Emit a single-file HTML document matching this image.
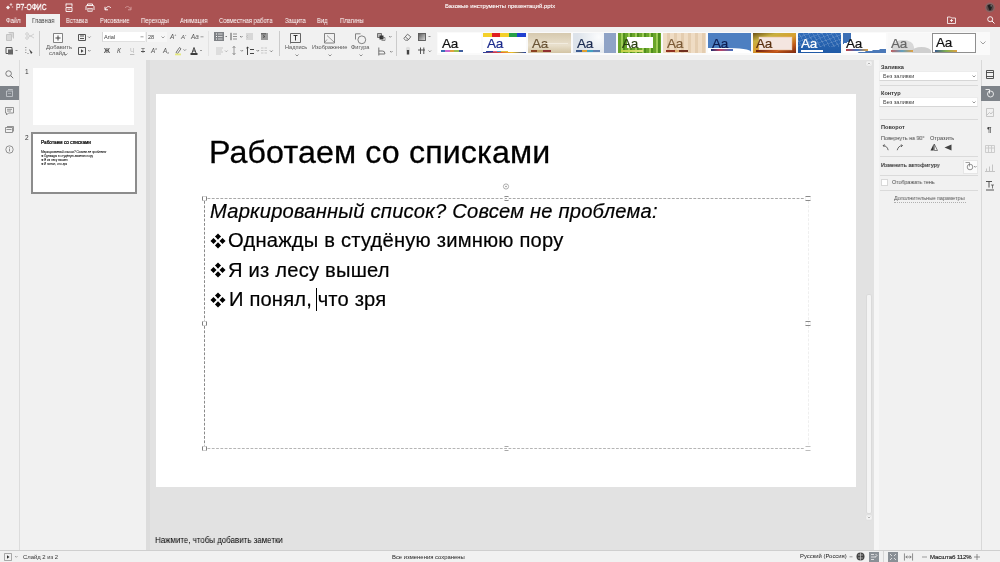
<!DOCTYPE html>
<html><head><meta charset="utf-8">
<style>
*{margin:0;padding:0;box-sizing:border-box}
html,body{width:1000px;height:562px;overflow:hidden;background:#f1f1f1;font-family:"Liberation Sans",sans-serif;position:relative}
.a{position:absolute}
.t{position:absolute;white-space:nowrap;line-height:1;will-change:transform}
svg{position:absolute;overflow:visible}
.hdr{left:0;top:0;width:1000px;height:27px;background:#aa5252}
.tab{color:#fff;font-size:6.8px;top:18px;transform-origin:0 0;transform:scaleX(.86)}
.tb{left:0;top:27px;width:1000px;height:33px;background:#f1f1f1}
.sep{position:absolute;width:1px;background:#cbcbcb}
.canvas{left:146px;top:60px;width:728px;height:490px;background:#e2e2e2;border-left:4px solid #dcdcdc}
.slide{left:156px;top:94px;width:700px;height:393px;background:#fff}
.status{left:0;top:550px;width:1000px;height:12px;background:#f1f1f1;border-top:1px solid #cfcfcf}
.lbar{left:0;top:60px;width:20px;height:490px;background:#f1f1f1;border-right:1px solid #dcdcdc}
.thumbs{left:20px;top:60px;width:126px;height:490px;background:#f1f1f1}
.rpanel{left:874px;top:60px;width:108px;height:490px;background:#f1f1f1}
.rbar{left:981px;top:60px;width:19px;height:490px;background:#f1f1f1;border-left:1px solid #d8d8d8}
.ico{stroke:#444;fill:none;stroke-width:1}
.tile{position:absolute;top:33px;width:43px;height:20px;overflow:hidden}
.tile .aa{will-change:transform;position:absolute;left:3.5px;top:3.5px;font-size:13.5px;line-height:1;letter-spacing:-0.2px;-webkit-text-stroke:.2px currentColor}
.bars{position:absolute;left:3px;top:17px;height:1.5px;width:26px}
.rl{font-size:5.6px;color:#333;font-weight:bold}
.rt{font-size:5.6px;color:#444}
.combo{position:absolute;background:#fff;border:1px solid #ececec;border-bottom-color:#d6d6d6;height:10px}
.hl{position:absolute;height:1px;background:#dadada}
</style></head><body>
<!-- header -->
<div class="a hdr"></div>
<div class="a tb"></div>
<div class="a canvas"></div>
<div class="a slide"></div>
<div class="a lbar"></div>
<div class="a thumbs"></div>
<div class="a rpanel"></div>
<div class="a rbar"></div>
<div class="a status"></div>




<!-- SLIDE CONTENT -->
<div class="t" style="left:209px;top:135.5px;font-size:32.2px;color:#000;letter-spacing:.12px;-webkit-text-stroke:.3px #000">Работаем со списками</div>
<svg style="left:0;top:0" width="1000" height="562" viewBox="0 0 1000 562">
<g stroke-width="1" fill="none">
<path d="M207.5 198.5H805" stroke="#a8a8a8" stroke-dasharray="2.8 1.5"/>
<path d="M204.5 201V320.5 M204.5 326V445.5" stroke="#8a8a8a" stroke-dasharray="2.8 1.6"/>
<path d="M207.5 448.5H805" stroke="#b5b5b5" stroke-dasharray="2.8 1.5"/>
<path d="M808.5 201V446" stroke="#efefef" stroke-dasharray="2.8 1.5"/>
<g stroke="#d0d0d0"><path d="M202.5 196.5h4 M202.5 200.5h4 M202.5 321.5h4 M202.5 325.5h4 M202.5 446.5h4 M202.5 450.5h4"/></g>
<g stroke="#808080"><path d="M202.5 196.5v4 M206.5 196.5v4 M202.5 321.5v4 M206.5 321.5v4 M202.5 446.5v4 M206.5 446.5v4"/></g>
<g stroke="#f2f2f2"><path d="M504.5 196.5v4 M508.5 196.5v4 M805.5 196.5v4 M810.5 196.5v4 M805.5 321.5v4 M810.5 321.5v4"/></g>
<g stroke="#8a8a8a"><path d="M504.5 196.5h4 M504.5 200.5h4 M805.5 196.5h5 M805.5 200.5h5 M805.5 321.5h5 M805.5 325.5h5"/></g>
<path d="M504.5 446.5h4 M504.5 450.5h4" stroke="#a8a8a8"/>
<path d="M805.5 446.5h5 M805.5 450.5h5" stroke="#bdbdbd"/>
<circle cx="506" cy="186.5" r="2.6" stroke="#999" stroke-width=".8"/>
<circle cx="506" cy="186.5" r=".7" fill="#777" stroke="none"/>
</g></svg>
<div class="t" style="left:209.5px;top:201.6px;font-size:19.3px;color:#000;font-style:italic;letter-spacing:.2px;-webkit-text-stroke:.2px #000;transform-origin:0 0;transform:scaleX(1.045)">Маркированный список? Совсем не проблема:</div>
<svg style="left:210px;top:232.5px" width="16" height="16" viewBox="0 0 16 16"><path d="M8 0.5500000000000003Q9.42 2.18 11.05 3.6Q9.42 5.02 8 6.65Q6.58 5.02 4.95 3.6Q6.58 2.18 8 0.5500000000000003Z M3.5 4.95Q4.92 6.58 6.55 8Q4.92 9.42 3.5 11.05Q2.08 9.42 0.4500000000000002 8Q2.08 6.58 3.5 4.95Z M12.5 4.95Q13.92 6.58 15.55 8Q13.92 9.42 12.5 11.05Q11.08 9.42 9.45 8Q11.08 6.58 12.5 4.95Z M8 9.350000000000001Q9.42 10.98 11.05 12.4Q9.42 13.82 8 15.45Q6.58 13.82 4.95 12.4Q6.58 10.98 8 9.350000000000001Z" fill="#000"/></svg>
<div class="t" style="left:228px;top:231.1px;font-size:19.3px;color:#000;letter-spacing:.2px;-webkit-text-stroke:.2px #000;transform-origin:0 0;transform:scaleX(1.045)">Однажды в студёную зимнюю пору</div>
<svg style="left:210px;top:262px" width="16" height="16" viewBox="0 0 16 16"><path d="M8 0.5500000000000003Q9.42 2.18 11.05 3.6Q9.42 5.02 8 6.65Q6.58 5.02 4.95 3.6Q6.58 2.18 8 0.5500000000000003Z M3.5 4.95Q4.92 6.58 6.55 8Q4.92 9.42 3.5 11.05Q2.08 9.42 0.4500000000000002 8Q2.08 6.58 3.5 4.95Z M12.5 4.95Q13.92 6.58 15.55 8Q13.92 9.42 12.5 11.05Q11.08 9.42 9.45 8Q11.08 6.58 12.5 4.95Z M8 9.350000000000001Q9.42 10.98 11.05 12.4Q9.42 13.82 8 15.45Q6.58 13.82 4.95 12.4Q6.58 10.98 8 9.350000000000001Z" fill="#000"/></svg>
<div class="t" style="left:228px;top:260.6px;font-size:19.3px;color:#000;letter-spacing:.2px;-webkit-text-stroke:.2px #000;transform-origin:0 0;transform:scaleX(1.045)">Я из лесу вышел</div>
<svg style="left:210px;top:291.5px" width="16" height="16" viewBox="0 0 16 16"><path d="M8 0.5500000000000003Q9.42 2.18 11.05 3.6Q9.42 5.02 8 6.65Q6.58 5.02 4.95 3.6Q6.58 2.18 8 0.5500000000000003Z M3.5 4.95Q4.92 6.58 6.55 8Q4.92 9.42 3.5 11.05Q2.08 9.42 0.4500000000000002 8Q2.08 6.58 3.5 4.95Z M12.5 4.95Q13.92 6.58 15.55 8Q13.92 9.42 12.5 11.05Q11.08 9.42 9.45 8Q11.08 6.58 12.5 4.95Z M8 9.350000000000001Q9.42 10.98 11.05 12.4Q9.42 13.82 8 15.45Q6.58 13.82 4.95 12.4Q6.58 10.98 8 9.350000000000001Z" fill="#000"/></svg>
<div class="t" style="left:228.5px;top:290.4px;font-size:19.3px;color:#000;letter-spacing:.16px;-webkit-text-stroke:.2px #000;transform-origin:0 0;transform:scaleX(1.045)">И понял, что зря</div>
<div class="a" style="left:316px;top:287.5px;width:1px;height:23px;background:#000"></div>

<!-- LEFT BAR -->
<svg style="left:5px;top:70px" width="9" height="9" viewBox="0 0 9 9"><circle cx="3.6" cy="3.6" r="2.8" stroke="#707070" fill="none" stroke-width=".9"/><path d="M5.6 5.6l2.6 2.6" stroke="#707070" stroke-width="1"/></svg>
<div class="a" style="left:0;top:86px;width:19px;height:14px;background:#7e8389"></div>
<svg style="left:5px;top:88px" width="9" height="10" viewBox="0 0 9 10"><path d="M1.5 3h6v5.5h-6z M3 1.5h4.5v1" stroke="#c9cdd2" fill="none" stroke-width=".8"/><path d="M3 5.5h3" stroke="#b8bcc0" stroke-width=".7"/></svg>
<svg style="left:5px;top:107px" width="9" height="9" viewBox="0 0 9 9"><path d="M.5 .5h8v5.5h-5l-2 2v-2h-1z M2 2.3h5 M2 4h4" stroke="#7a7a7a" fill="none" stroke-width=".8"/></svg>
<svg style="left:5px;top:126px" width="9" height="9" viewBox="0 0 9 9"><path d="M.5 1.5h7v5h-7z M2 .5h6.5v5 M1.5 3.5h5" stroke="#7a7a7a" fill="none" stroke-width=".8"/></svg>
<svg style="left:5px;top:145px" width="9" height="9" viewBox="0 0 9 9"><circle cx="4.5" cy="4.5" r="3.7" stroke="#7a7a7a" fill="none" stroke-width=".8"/><path d="M4.5 3.5v3 M4.5 2v.7" stroke="#7a7a7a" stroke-width=".8"/></svg>
<!-- THUMBS -->
<div class="t" style="left:25px;top:68.5px;font-size:6.5px;color:#333">1</div>
<div class="a" style="left:33px;top:68px;width:101px;height:57px;background:#fff"></div>
<div class="t" style="left:25px;top:135px;font-size:6.5px;color:#333">2</div>
<div class="a" style="left:31px;top:132px;width:106px;height:62px;background:#fff;border:2px solid #8c8c8c"></div>
<div class="t" style="left:40.5px;top:140.7px;font-size:4.75px;color:#000;-webkit-text-stroke:.2px #000">Работаем со списками</div>
<div class="t" style="left:40.5px;top:150.5px;font-size:3px;color:#111;-webkit-text-stroke:.06px #000;font-style:italic">Маркированный список? Совсем не проблема:</div>
<div class="t" style="left:40.5px;top:154.5px;font-size:3px;color:#111;-webkit-text-stroke:.06px #000">❖Однажды в студёную зимнюю пору</div>
<div class="t" style="left:40.5px;top:158.7px;font-size:3px;color:#111;-webkit-text-stroke:.06px #000">❖Я из лесу вышел</div>
<div class="t" style="left:40.5px;top:162.8px;font-size:3px;color:#111;-webkit-text-stroke:.06px #000">❖И понял, что зря</div>
<!-- notes -->
<div class="t" style="left:155px;top:536.3px;font-size:8.9px;color:#000;transform-origin:0 0;transform:scaleX(.893)">Нажмите, чтобы добавить заметки</div>
<!-- scrollbar -->
<svg style="left:865px;top:60px" width="8" height="7" viewBox="0 0 8 7"><rect x="1" y="1" width="6" height="5" rx="1" fill="#f3f3f3" stroke="#d8d8d8" stroke-width=".5"/><path d="M2.8 4.2l1.2-1.2l1.2 1.2" stroke="#888" fill="none" stroke-width=".6"/></svg>
<div class="a" style="left:865.5px;top:294px;width:6px;height:220px;background:#f4f4f4;border:1px solid #dadada;border-radius:2px"></div>
<svg style="left:865px;top:514px" width="8" height="7" viewBox="0 0 8 7"><rect x="1" y="1" width="6" height="5" rx="1" fill="#f3f3f3" stroke="#d8d8d8" stroke-width=".5"/><path d="M2.8 2.8l1.2 1.2l1.2-1.2" stroke="#888" fill="none" stroke-width=".6"/></svg>
<div class="a" style="left:874px;top:60px;width:5px;height:490px;background:#f6f6f6"></div>
<!-- RIGHT PANEL -->
<div class="t rl" style="left:880.5px;top:64.8px">Заливка</div>
<div class="combo" style="left:879px;top:70.5px;width:99px"></div>
<div class="t rt" style="left:882.8px;top:73.6px">Без заливки</div>
<svg style="left:972px;top:75px" width="4" height="3" viewBox="0 0 4 3"><path d="M.5 .5l1.5 1.5l1.5-1.5" stroke="#555" fill="none" stroke-width=".6"/></svg>
<div class="hl" style="left:880px;top:85px;width:98px"></div>
<div class="t rl" style="left:880.5px;top:90.5px">Контур</div>
<div class="combo" style="left:879px;top:97px;width:99px"></div>
<div class="t rt" style="left:882.8px;top:100px">Без заливки</div>
<svg style="left:972px;top:101px" width="4" height="3" viewBox="0 0 4 3"><path d="M.5 .5l1.5 1.5l1.5-1.5" stroke="#555" fill="none" stroke-width=".6"/></svg>
<div class="hl" style="left:880px;top:119px;width:98px"></div>
<div class="t rl" style="left:880.5px;top:124.5px">Поворот</div>
<div class="t rt" style="left:880.5px;top:135.5px;transform-origin:0 0;transform:scaleX(.96)">Повернуть на 90°</div>
<div class="t rt" style="left:930px;top:135.5px">Отразить</div>
<svg style="left:882px;top:144px" width="8" height="8" viewBox="0 0 8 8"><path d="M1.2 1.6Q5 1.6 6.2 6.2" stroke="#444" fill="none" stroke-width=".8"/><path d="M2.6 .4L1.2 1.6L2.4 3" stroke="#444" fill="none" stroke-width=".8"/></svg>
<svg style="left:895.5px;top:144px" width="8" height="8" viewBox="0 0 8 8"><path d="M1.2 6.2Q2.4 1.6 6.4 1.6" stroke="#444" fill="none" stroke-width=".8"/><path d="M5.2 .4L6.4 1.6L5 3" stroke="#444" fill="none" stroke-width=".8"/></svg>
<svg style="left:930px;top:144px" width="8" height="7" viewBox="0 0 8 7"><path d="M3.7 0 L3.7 6.5 L.5 6.5z" fill="#333"/><path d="M4.3 0 L4.3 6.5 L7.5 6.5z" fill="none" stroke="#333" stroke-width=".6"/></svg>
<svg style="left:944px;top:144px" width="8" height="7" viewBox="0 0 8 7"><path d="M7.5 .5 L7.5 6.5 L.5 3.5z" fill="#444"/></svg>
<div class="hl" style="left:880px;top:156px;width:98px"></div>
<div class="t rl" style="left:880.5px;top:162.8px;transform-origin:0 0;transform:scaleX(.96)">Изменить автофигуру</div>
<div class="a" style="left:962.5px;top:159.5px;width:15px;height:14px;background:#fbfbfb;border:1px solid #e6e6e6"></div>
<svg style="left:964.5px;top:161.5px" width="12" height="9" viewBox="0 0 12 9"><path d="M.5 .5h4v4" stroke="#666" fill="none" stroke-width=".6"/><circle cx="5" cy="5" r="2.8" stroke="#666" fill="none" stroke-width=".7"/><path d="M9 4l1.3 1.3l1.3-1.3" stroke="#555" fill="none" stroke-width=".6"/></svg>
<div class="hl" style="left:880px;top:175px;width:98px"></div>
<div class="a" style="left:880.5px;top:179px;width:7px;height:7px;background:#fff;border:1px solid #d8d8d8"></div>
<div class="t rt" style="left:892px;top:180px;transform-origin:0 0;transform:scaleX(.95)">Отображать тень</div>
<div class="hl" style="left:880px;top:190px;width:98px"></div>
<div class="t rt" style="left:893.7px;top:196.2px;color:#555;transform-origin:0 0;transform:scaleX(.94)">Дополнительные параметры</div>
<div class="a" style="left:894px;top:201.5px;width:72px;height:0;border-top:1px dotted #b0b0b0"></div>
<!-- RIGHT BAR -->
<svg style="left:986px;top:70px" width="8" height="9" viewBox="0 0 8 9"><path d="M.5 .5h7v8h-7z M.5 2.5h7 M.5 6.5h7" stroke="#444" fill="none" stroke-width=".9"/></svg>
<div class="a" style="left:981px;top:86px;width:19px;height:15px;background:#7e8389"></div>
<svg style="left:985px;top:89px" width="10" height="9" viewBox="0 0 10 9"><path d="M.5 .5h4v4" stroke="#fff" fill="none" stroke-width=".8"/><circle cx="5.5" cy="5" r="3" stroke="#fff" fill="none" stroke-width=".8"/></svg>
<svg style="left:986px;top:108px" width="8" height="9" viewBox="0 0 8 9"><path d="M.5 .5h7v8h-7z M1 7 L3.5 4.5 L5 6 L7 3.5" stroke="#bbb" fill="none" stroke-width=".8"/></svg>
<div class="t" style="left:987px;top:126px;font-size:8px;font-weight:bold;color:#444">¶</div>
<svg style="left:985px;top:145px" width="10" height="8" viewBox="0 0 10 8"><path d="M.5 .5h9v7h-9z M.5 3h9 M3.5 .5v7 M6.5 .5v7" stroke="#c4c4c4" fill="none" stroke-width=".8"/></svg>
<svg style="left:985px;top:163px" width="10" height="9" viewBox="0 0 10 9"><path d="M1.5 8.5v-3 M4.5 8.5v-5 M7.5 8.5v-7 M0 8.5h10" stroke="#c4c4c4" fill="none" stroke-width="1"/></svg>
<svg style="left:985px;top:181px" width="10" height="10" viewBox="0 0 10 10"><path d="M1 .5h6 M4 .5v6 M1 9h8" stroke="#444" fill="none" stroke-width=".9"/><path d="M6 4h3 M7.5 4v3.5" stroke="#444" fill="none" stroke-width=".7"/></svg>
<!-- STATUS -->
<svg style="left:4px;top:553px" width="16" height="8" viewBox="0 0 16 8"><path d="M.5 .5h7v7h-7z" stroke="#888" fill="none" stroke-width=".7"/><path d="M3 2.3v3.4l2.5-1.7z" fill="#333"/><path d="M11 3l1.3 1.3l1.3-1.3" stroke="#777" fill="none" stroke-width=".6"/></svg>
<div class="t" style="left:23px;top:554.7px;font-size:5.9px;color:#333">Слайд 2 из 2</div>
<div class="t" style="left:392px;top:554.5px;font-size:5.9px;color:#222">Все изменения сохранены</div>
<div class="t" style="left:800px;top:553.8px;font-size:5.9px;color:#222">Русский (Россия)</div>
<svg style="left:849px;top:555.5px" width="4" height="3" viewBox="0 0 4 3"><path d="M.5 .8h3" stroke="#777" stroke-width=".7"/></svg>
<svg style="left:855.5px;top:552px" width="9" height="9" viewBox="0 0 9 9"><circle cx="4.5" cy="4.5" r="4" fill="#444"/><path d="M2 3h5 M2 6h5 M4.5 .5v8" stroke="#ddd" stroke-width=".6"/></svg>
<div class="a" style="left:869px;top:552px;width:10px;height:10px;background:#8a9096"></div><div class="a" style="left:883px;top:551px;width:1px;height:11px;background:#d6d6d6"></div>
<svg style="left:870px;top:553px" width="8" height="8" viewBox="0 0 8 8"><path d="M1 1.5h3 M1 4h5 M1 6.5h3 M5.5 1l1.5 1.5l-1.5 1.5" stroke="#fff" fill="none" stroke-width=".7"/></svg>
<div class="a" style="left:888px;top:552px;width:10px;height:10px;background:#8a9096"></div>
<svg style="left:889px;top:553px" width="8" height="8" viewBox="0 0 8 8"><path d="M1 1l2 2 M7 1l-2 2 M1 7l2-2 M7 7l-2-2" stroke="#fff" fill="none" stroke-width=".7"/></svg>
<svg style="left:903.5px;top:553px" width="9" height="8" viewBox="0 0 10 8"><path d="M.5 0v8 M9.5 0v8 M2 4h6 M3.5 2.5l-1.5 1.5l1.5 1.5 M6.5 2.5l1.5 1.5l-1.5 1.5" stroke="#555" fill="none" stroke-width=".7"/></svg>
<svg style="left:922px;top:556px" width="5" height="2" viewBox="0 0 5 2"><path d="M0 1h5" stroke="#777" stroke-width=".7"/></svg>
<div class="t" style="left:929.5px;top:553.8px;font-size:6px;color:#222;-webkit-text-stroke:.15px #222;letter-spacing:-.05px">Масштаб 112%</div>
<svg style="left:973.5px;top:554px" width="6" height="6" viewBox="0 0 6 6"><path d="M0 3h6 M3 0v6" stroke="#666" stroke-width=".7"/></svg>

<!-- TOOLBAR -->
<!-- clipboard -->
<svg style="left:5px;top:32px" width="10" height="9" viewBox="0 0 10 9"><path d="M1.5 2.5h5v6h-5z M3.5 .5h5v6" stroke="#c4c4c4" fill="#d8d8d8" stroke-width="1"/></svg>
<svg style="left:25px;top:32px" width="10" height="8" viewBox="0 0 10 8"><circle cx="2" cy="2" r="1.3" stroke="#c8c8c8" fill="none" stroke-width=".8"/><circle cx="2" cy="6" r="1.3" stroke="#c8c8c8" fill="none" stroke-width=".8"/><path d="M3 2.6L9 6 M3 5.4L9 2" stroke="#c8c8c8" stroke-width=".8"/></svg>
<svg style="left:5px;top:46px" width="14" height="9" viewBox="0 0 14 9"><path d="M1 1.5h6v6h-6z" stroke="#555" fill="none" stroke-width="1"/><rect x="3" y="3.5" width="5" height="5" fill="#666"/><path d="M10.5 4.5h2" stroke="#777" stroke-width=".8"/></svg>
<svg style="left:25px;top:47px" width="9" height="8" viewBox="0 0 9 8"><path d="M.8 0v1 M.8 2.5v1 M.8 5v1 M2.5 6.5h1" stroke="#666" stroke-width=".8"/><path d="M4 2 L7.5 5.5 L6 7 Z" fill="#444"/></svg>
<div class="sep" style="left:39px;top:31px;height:25px"></div>
<!-- slides -->
<svg style="left:53px;top:33px" width="10" height="10" viewBox="0 0 10 10"><path d="M.5 .5h9v9h-9z" stroke="#666" fill="#fafafa" stroke-width=".8"/><path d="M5 2.5v5 M2.5 5h5" stroke="#333" stroke-width=".9"/></svg>
<div class="t" style="left:45.5px;top:44.8px;font-size:5.9px;color:#555">Добавить</div>
<div class="t" style="left:48.5px;top:50.8px;font-size:5.9px;color:#555">слайд</div>
<svg style="left:64px;top:53px" width="4" height="3" viewBox="0 0 4 3"><path d="M.5 .5l1.5 1.5l1.5-1.5" stroke="#666" fill="none" stroke-width=".7"/></svg>
<svg style="left:78px;top:34px" width="14" height="7" viewBox="0 0 14 7"><path d="M.5 .5h7v6h-7z M2 2h4 M2 4.5h4" stroke="#555" fill="none" stroke-width="1"/><path d="M10 2.5l1.3 1.3l1.3-1.3" stroke="#666" fill="none" stroke-width=".7"/></svg>
<svg style="left:78px;top:47px" width="14" height="8" viewBox="0 0 14 8"><path d="M.5 .5h7v7h-7z" stroke="#555" fill="none" stroke-width="1"/><path d="M3 2.3v3.4l2.6-1.7z" fill="#444"/><path d="M10 3l1.3 1.3l1.3-1.3" stroke="#666" fill="none" stroke-width=".7"/></svg>
<!-- font -->
<div class="a" style="left:102px;top:32px;width:43px;height:10px;background:#fff;border-left:1px solid #d5d5d5;border-bottom:1px solid #e0e0e0"></div>
<div class="t" style="left:104px;top:35px;font-size:5.6px;color:#444">Arial</div>
<svg style="left:140px;top:36px" width="4" height="3" viewBox="0 0 4 3"><path d="M.5 .8h3" stroke="#777" stroke-width=".7"/></svg>
<div class="a" style="left:146px;top:32px;width:21px;height:10px;background:#f6f6f6;border-left:1px solid #dcdcdc"></div>
<div class="t" style="left:148px;top:35px;font-size:5.6px;color:#444">28</div>
<svg style="left:161px;top:36px" width="4" height="3" viewBox="0 0 4 3"><path d="M.5 .5l1.5 1.5l1.5-1.5" stroke="#777" fill="none" stroke-width=".7"/></svg>
<div class="t" style="left:169.5px;top:33.8px;font-size:6.5px;color:#555;font-style:italic">A<sup style="font-size:3.5px;vertical-align:3px">+</sup></div>
<div class="t" style="left:181px;top:34.3px;font-size:6px;color:#555;font-style:italic">A<sup style="font-size:3.5px;vertical-align:3px">-</sup></div>
<div class="t" style="left:191px;top:34px;font-size:6.3px;color:#555;font-style:italic">Aa</div>
<svg style="left:200px;top:36px" width="4" height="3" viewBox="0 0 4 3"><path d="M.5 .8h3" stroke="#777" stroke-width=".7"/></svg>
<div class="t" style="left:104px;top:48px;font-size:6.5px;color:#444;font-weight:bold">Ж</div>
<div class="t" style="left:117px;top:48px;font-size:6.5px;color:#555;font-style:italic">К</div>
<div class="t" style="left:129.5px;top:47.5px;font-size:6.5px;color:#bbb;text-decoration:underline">Ч</div>
<div class="t" style="left:140.5px;top:47.8px;font-size:6.5px;color:#555;text-decoration:line-through">Т</div>
<div class="t" style="left:151px;top:48px;font-size:6.3px;color:#555;font-style:italic">A<sup style="font-size:3.5px;vertical-align:3px">x</sup></div>
<div class="t" style="left:162.5px;top:48px;font-size:6.3px;color:#555;font-style:italic">A<sub style="font-size:3.5px;vertical-align:-1px">x</sub></div>
<svg style="left:174px;top:46px" width="14" height="10" viewBox="0 0 14 10"><path d="M2 6.5 L5.5 1.5 L7 2.8 L3.5 7.5z" stroke="#555" fill="none" stroke-width=".8"/><rect x="1" y="7.5" width="6" height="1.8" fill="#e6ea80"/><path d="M9.5 3.3l1.3 1.3l1.3-1.3" stroke="#666" fill="none" stroke-width=".7"/></svg>
<svg style="left:190px;top:46px" width="14" height="10" viewBox="0 0 14 10"><path d="M2 7 L4 1.5 L6 7 M2.8 5h2.4" stroke="#333" fill="none" stroke-width=".9"/><rect x="0.5" y="7.2" width="7" height="1.6" fill="#111"/><path d="M10 4.5h2" stroke="#777" stroke-width=".7"/></svg>
<div class="sep" style="left:208px;top:31px;height:25px;background:#e2e2e2"></div>
<!-- paragraph -->
<div class="a" style="left:214px;top:32px;width:10px;height:9px;background:#7f8286"></div>
<svg style="left:214px;top:32px" width="16" height="9" viewBox="0 0 16 9"><path d="M2 2h1 M2 4.5h1 M2 7h1" stroke="#fff" stroke-width="1"/><path d="M4 2h4.5 M4 4.5h4.5 M4 7h4.5" stroke="#e6e6e6" stroke-width=".8"/><path d="M11.5 4.5h1.5" stroke="#555" stroke-width=".8"/></svg>
<svg style="left:230px;top:32px" width="14" height="9" viewBox="0 0 14 9"><path d="M1 .8v7.4" stroke="#555" stroke-width="1"/><path d="M3 2h4 M3 4.5h4 M3 7h4" stroke="#777" stroke-width=".8"/><path d="M10 4l1.3 1.3l1.3-1.3" stroke="#555" fill="none" stroke-width=".7"/></svg>
<svg style="left:246px;top:33px" width="7" height="7" viewBox="0 0 7 7"><rect x="0" y="0" width="7" height="7" fill="#d7d7d7"/><path d="M2 2 L.5 3.5 L2 5" stroke="#bbb" fill="none" stroke-width=".7"/></svg>
<svg style="left:261px;top:33px" width="7" height="7" viewBox="0 0 7 7"><rect x="0" y="0" width="7" height="7" fill="#9a9a9a"/><path d="M0 .8h5 M2 2.5 L4 3.5 L2 4.5" stroke="#444" fill="none" stroke-width=".8"/></svg>
<svg style="left:216px;top:47px" width="14" height="8" viewBox="0 0 14 8"><path d="M0 1h7 M0 3h6 M0 5h7 M0 7h5" stroke="#c9c9c9" stroke-width="1"/><path d="M9 3.5l1.3 1.3l1.3-1.3" stroke="#999" fill="none" stroke-width=".7"/></svg>
<svg style="left:231px;top:46px" width="14" height="10" viewBox="0 0 14 10"><path d="M3 0v9 M1.5 2l1.5-1.5l1.5 1.5 M1.5 7l1.5 1.5l1.5-1.5" stroke="#777" fill="none" stroke-width=".7"/><path d="M9.5 4l1.3 1.3l1.3-1.3" stroke="#666" fill="none" stroke-width=".7"/></svg>
<svg style="left:246px;top:46px" width="14" height="10" viewBox="0 0 14 10"><path d="M1.5 1v8 M.3 2.2l1.2-1.2l1.2 1.2" stroke="#333" fill="none" stroke-width=".9"/><path d="M4 3.5h4 M4 7.5h4" stroke="#444" stroke-width="1"/><path d="M10.5 4l1.3 1.3l1.3-1.3" stroke="#555" fill="none" stroke-width=".7"/></svg>
<svg style="left:261px;top:47px" width="14" height="8" viewBox="0 0 14 8"><path d="M0 1h2.5 M0 3.5h2.5 M0 6h2.5 M3.5 1h2.5 M3.5 3.5h2.5 M3.5 6h2.5" stroke="#c9c9c9" stroke-width="1.2"/><path d="M9 3.5l1.3 1.3l1.3-1.3" stroke="#555" fill="none" stroke-width=".7"/></svg>
<div class="sep" style="left:279px;top:31px;height:25px"></div>
<!-- insert -->
<svg style="left:290px;top:33px" width="12" height="11" viewBox="0 0 12 11"><path d="M.5 .5h10v9h-10z" stroke="#555" fill="none" stroke-width=".9"/><path d="M3.5 2.5h4 M5.5 2.5v5" stroke="#333" stroke-width="1"/><path d="M.5 9.5v1" stroke="#555" stroke-width=".9"/></svg>
<div class="t" style="left:285px;top:44.8px;font-size:5.6px;color:#555">Надпись</div>
<svg style="left:295px;top:54px" width="4" height="3" viewBox="0 0 4 3"><path d="M.5 .5l1.5 1.5l1.5-1.5" stroke="#666" fill="none" stroke-width=".7"/></svg>
<svg style="left:323.5px;top:33px" width="12" height="11" viewBox="0 0 12 11"><path d="M.5 .5h10v9.5h-10z" stroke="#666" fill="none" stroke-width=".8"/><path d="M1 9 L3 6.5 M3 2.5 L10 9" stroke="#777" fill="none" stroke-width=".7"/></svg>
<div class="t" style="left:312px;top:44.8px;font-size:5.6px;color:#555">Изображение</div>
<svg style="left:328px;top:54px" width="4" height="3" viewBox="0 0 4 3"><path d="M.5 .5l1.5 1.5l1.5-1.5" stroke="#666" fill="none" stroke-width=".7"/></svg>
<svg style="left:354.5px;top:32.5px" width="12" height="12" viewBox="0 0 12 12"><path d="M.5 6.5V.8H5.5" stroke="#666" fill="none" stroke-width=".8"/><circle cx="6.8" cy="6.8" r="3.9" stroke="#666" fill="none" stroke-width=".8"/></svg>
<div class="t" style="left:351px;top:44.8px;font-size:5.6px;color:#555">Фигура</div>
<svg style="left:359px;top:54px" width="4" height="3" viewBox="0 0 4 3"><path d="M.5 .5l1.5 1.5l1.5-1.5" stroke="#666" fill="none" stroke-width=".7"/></svg>
<svg style="left:377px;top:33px" width="16" height="8" viewBox="0 0 16 8"><path d="M.5 .5h4v4h-4z" stroke="#555" fill="#bbb" stroke-width=".8"/><rect x="2.5" y="2.5" width="4" height="4" fill="#333"/><path d="M4.5 4.5h3.5v3h-3.5" stroke="#555" fill="none" stroke-width=".6"/><path d="M12 3l1.3 1.3l1.3-1.3" stroke="#666" fill="none" stroke-width=".7"/></svg>
<svg style="left:377.5px;top:46.5px" width="16" height="9" viewBox="0 0 16 9"><path d="M.8 .5v8 M.8 4h3.5q2.5 0 2.5 2.2v.8h-6" stroke="#555" fill="none" stroke-width=".8"/><path d="M12 4l1.3 1.3l1.3-1.3" stroke="#666" fill="none" stroke-width=".7"/></svg>
<div class="sep" style="left:396px;top:31px;height:25px"></div>
<!-- misc -->
<svg style="left:403px;top:33px" width="9" height="8" viewBox="0 0 9 8"><path d="M.8 5.5 L4.5 1.2 L7.8 3.8 L5 7.2 L2.5 7.2z M2.5 4l3 2.5" stroke="#555" fill="none" stroke-width=".8"/></svg>
<svg style="left:418px;top:33px" width="14" height="8" viewBox="0 0 14 8"><defs><linearGradient id="gsz" x1="0" y1="0" x2="1" y2="1"><stop offset="0" stop-color="#555"/><stop offset="1" stop-color="#ddd"/></linearGradient></defs><rect x=".5" y=".5" width="7" height="7" fill="url(#gsz)" stroke="#555" stroke-width=".9"/><path d="M10.5 3.5h2" stroke="#666" stroke-width=".7"/></svg>
<svg style="left:404px;top:46px" width="8" height="9" viewBox="0 0 8 9"><circle cx="4" cy="3" r="2.2" fill="#ddd"/><rect x="2.8" y="4" width="2.4" height="4.5" fill="#444"/></svg>
<svg style="left:418px;top:47px" width="14" height="8" viewBox="0 0 14 8"><path d="M0 3h7 M2.5 .5v6.5 M5.8 .5v6.5" stroke="#444" stroke-width=".9"/><path d="M10.5 3.5l1.3 1.3l1.3-1.3" stroke="#666" fill="none" stroke-width=".7"/></svg>


<!-- gallery -->
<div class="a" style="left:437px;top:32px;width:553px;height:23px;background:#fafafa"></div>
<!-- 1 white -->
<div class="tile" style="left:438px;background:#fff"><div class="aa" style="color:#111">Aa</div>
<div class="bars" style="left:3px;top:17px;width:22px;background:linear-gradient(90deg,#3b6fb6 0 20%,#c96ad0 20% 40%,#e0a040 40% 60%,#9ac050 60% 80%,#4060a0 80%)"></div></div>
<!-- 2 rainbow top -->
<div class="tile" style="left:483px;background:#fff">
<div class="a" style="left:0;top:0;width:43px;height:4px;background:linear-gradient(90deg,#f4d02a 0 20%,#e02020 20% 40%,#f4d02a 40% 60%,#28a048 60% 80%,#2040d0 80%)"></div>
<div class="aa" style="color:#1b2a8c;top:4.3px">Aa</div>
<div class="bars" style="top:18px;width:22px;background:linear-gradient(90deg,#2040a0 0 30%,#e06080 30% 50%,#40a0d0 50% 70%,#e0c040 70%)"></div>
<div class="a" style="left:0;top:19px;width:43px;height:1px;background:linear-gradient(90deg,#2040a0,#e04040,#f0c020,#2040a0)"></div></div>
<!-- 3 beige -->
<div class="tile" style="left:528px;background:linear-gradient(180deg,#d6c9ae,#e9e0cd 60%,#d3c4a4)"><div class="aa" style="color:#6b5536">Aa</div>
<div class="a" style="left:18px;top:10px;width:22px;height:1px;background:#f2ecdf"></div>
<div class="bars" style="top:17px;width:20px;background:linear-gradient(90deg,#8a4020 0 30%,#c0a060 30% 60%,#903030 60%)"></div></div>
<!-- 4 light blue -->
<div class="tile" style="left:573px;background:radial-gradient(circle at 60% 20%,#fbfcfd,#dde3ea 70%)"><div class="a" style="left:31px;top:0;width:12px;height:21px;background:#8fa3c6"></div><div class="aa" style="color:#1a2a50">Aa</div>
<div class="bars" style="top:17px;width:24px;background:linear-gradient(90deg,#3a5a90 0 25%,#e0a030 25% 45%,#40a0c0 45% 70%,#6080b0 70%)"></div></div>
<!-- 5 green -->
<div class="tile" style="left:618px;background:repeating-linear-gradient(90deg,#6aa52a 0 3px,#9dcb55 3px 5px,#4f8e1c 5px 7px)"><div class="a" style="left:9px;top:4px;width:26px;height:11px;background:#fff"></div><div class="aa" style="color:#2a4010">Aa</div>
<div class="bars" style="top:17px;width:22px;background:linear-gradient(90deg,#c0d040,#e0e080)"></div></div>
<!-- 6 beige stripes -->
<div class="tile" style="left:663px;background:repeating-linear-gradient(90deg,#efdcc4 0 4px,#e4cdb0 4px 7px)"><div class="aa" style="color:#7b5a36">Aa</div>
<div class="bars" style="top:17px;width:22px;background:linear-gradient(90deg,#903020 0 40%,#e0b070 40% 60%,#703020 60%)"></div></div>
<!-- 7 blue -->
<div class="tile" style="left:708px;background:#4d7fc1"><div class="a" style="left:0;top:15px;width:43px;height:6px;background:#fff;border-radius:0 60% 0 0"></div><div class="aa" style="color:#0f1e50">Aa</div>
<div class="bars" style="top:16px;width:22px;background:linear-gradient(90deg,#203070,#c04060 40%,#4070c0)"></div></div>
<!-- 8 orange -->
<div class="tile" style="left:752.5px;background:linear-gradient(160deg,#6a5018 0%,#c8b040 25%,#d8a030 50%,#c05818 75%,#7a2810 100%)"><div class="a" style="left:7px;top:4.5px;width:31px;height:11px;background:#f4e6e0;box-shadow:0 0 1px 1px #f0d8c8"></div><div class="aa" style="color:#5a3010">Aa</div>
<div class="bars" style="top:17px;width:22px;background:linear-gradient(90deg,#702010,#d06020)"></div></div>
<!-- 9 blue grid -->
<div class="tile" style="left:797.5px;background:linear-gradient(180deg,#2f6bb8,#1f5aa6);"><div class="a" style="left:0;top:0;width:43px;height:14px;background:repeating-linear-gradient(60deg,transparent 0 3px,rgba(255,255,255,.15) 3px 4px),repeating-linear-gradient(-20deg,transparent 0 3px,rgba(255,255,255,.12) 3px 4px)"></div><div class="aa" style="color:#fff">Aa</div>
<div class="bars" style="top:17px;width:22px;background:#fff"></div></div>
<!-- 10 white blue diag -->
<div class="tile" style="left:842.5px;background:#fff"><div class="a" style="left:0;top:0;width:8px;height:21px;background:linear-gradient(160deg,#3c6fb5 0 45%,transparent 46%)"></div><div class="a" style="left:0;top:16px;width:43px;height:5px;background:linear-gradient(172deg,transparent 0 50%,#4a78b8 52%)"></div><div class="aa" style="color:#111">Aa</div>
<div class="bars" style="top:16px;width:22px;background:linear-gradient(90deg,#c04040,#4070c0,#e0a040)"></div></div>
<!-- 11 grey mountains -->
<div class="tile" style="left:887.5px;background:#f8f8f8"><div class="a" style="left:4px;top:7px;width:22px;height:14px;background:#d8d8d8;border-radius:50% 50% 0 0"></div><div class="a" style="left:24px;top:14px;width:19px;height:8px;background:#cfcfcf;border-radius:60% 60% 0 0"></div><div class="aa" style="color:#666">Aa</div>
<div class="bars" style="top:17px;width:22px;background:linear-gradient(90deg,#c06060,#60a0c0,#e0a040)"></div></div>
<!-- 12 selected -->
<div class="tile" style="left:932px;width:44px;background:#fff;border:1px solid #8f8f8f"><div class="aa" style="color:#111;left:3px;top:2px">Aa</div>
<div class="bars" style="top:16px;left:2px;width:22px;background:linear-gradient(90deg,#3a5a90,#80b050,#e0a040)"></div></div>
<svg style="left:980px;top:41px" width="6" height="4" viewBox="0 0 6 4"><path d="M.5 .5l2.5 2.5l2.5-2.5" stroke="#777" fill="none" stroke-width=".7"/></svg>

<!-- logo -->
<svg style="left:5px;top:2px" width="10" height="9" viewBox="0 0 10 9"><path d="M1 5.5 L3 3.5 L5 5.5 L3 7.5Z" fill="#fff" opacity=".9"/><path d="M4.5 2.5 L6 1 L7.5 2.5 L6 4Z" fill="#fff" opacity=".7"/><path d="M6.5 5 L7.5 4 L8.5 5 L7.5 6Z" fill="#fff" opacity=".5"/></svg>
<div class="t" style="left:16px;top:1.6px;font-size:9.4px;color:#fff;-webkit-text-stroke:.35px #fff;transform-origin:0 0;transform:scaleX(.72)">Р7-ОФИС</div>
<!-- save -->
<svg style="left:65px;top:2.5px" width="8" height="9" viewBox="0 0 8 9"><path d="M1 1h6 M1 .6v3 M7 .6v3 M1 4.5h6v4h-6z" stroke="#fff" fill="none" stroke-width=".9"/><path d="M2.5 6.2h3" stroke="#fff" stroke-width=".8"/></svg>
<!-- print -->
<svg style="left:84.5px;top:2.5px" width="10" height="9" viewBox="0 0 10 9"><path d="M2.5 2.5v-1.5h5v1.5 M1 7v-3.5q0-1 1-1h6q1 0 1 1v3.5" stroke="#fff" fill="none" stroke-width=".9"/><rect x="2.8" y="5.5" width="4.4" height="3" fill="#c08888" stroke="#fff" stroke-width=".6"/></svg>
<!-- undo -->
<svg style="left:104px;top:3px" width="8" height="8" viewBox="0 0 8 8"><path d="M1 3.8v3h3" stroke="#fff" fill="none" stroke-width="1"/><path d="M1.3 6.5C2.5 3.5 5 2.5 7 5" stroke="#fff" fill="none" stroke-width=".9"/></svg>
<!-- redo -->
<svg style="left:124px;top:3px" width="8" height="8" viewBox="0 0 8 8"><path d="M7 3.8v3h-3" stroke="#d49a9a" fill="none" stroke-width="1"/><path d="M6.7 6.5C5.5 3.5 3 2.5 1 5" stroke="#d49a9a" fill="none" stroke-width=".9"/></svg>
<div class="t" style="left:444.5px;top:4.4px;font-size:5.9px;color:#fff;-webkit-text-stroke:.1px #fff">Базовые инструменты презентаций.pptx</div>
<!-- avatar -->
<svg style="left:984px;top:1.5px" width="12" height="11" viewBox="0 0 12 11"><circle cx="6" cy="5.5" r="5" fill="#8c6464"/><circle cx="6" cy="5.5" r="3.6" fill="#5a4848"/><path d="M3.5 3.5L6 2.5L8.5 3.5L7 8L5.5 8.5z" fill="#1e1e1e"/><path d="M6.5 3.2l1.5.3l-1 1.5z" fill="#aaa"/></svg>
<!-- tabs -->
<div class="a" style="left:26px;top:14px;width:34px;height:13px;background:#f1f1f1"></div>
<div class="t tab" style="left:6px">Файл</div>
<div class="t tab" style="left:32px;color:#444">Главная</div>
<div class="t tab" style="left:66px">Вставка</div>
<div class="t tab" style="left:100px">Рисование</div>
<div class="t tab" style="left:141px">Переходы</div>
<div class="t tab" style="left:180px">Анимация</div>
<div class="t tab" style="left:219px">Совместная работа</div>
<div class="t tab" style="left:285px">Защита</div>
<div class="t tab" style="left:317px">Вид</div>
<div class="t tab" style="left:340px">Плагины</div>
<!-- folder -->
<svg style="left:947px;top:16px" width="9" height="8" viewBox="0 0 9 8"><path d="M.5 1h3l1 1h4v5.5h-8z M4.5 3v3 M3 4.5h3" stroke="#fff" fill="none" stroke-width=".8"/></svg>
<!-- search -->
<svg style="left:987px;top:16px" width="8" height="8" viewBox="0 0 8 8"><circle cx="3.2" cy="3.2" r="2.5" stroke="#fff" fill="none" stroke-width=".9"/><path d="M5 5l2.5 2.5" stroke="#fff" stroke-width="1"/></svg>

</body></html>
